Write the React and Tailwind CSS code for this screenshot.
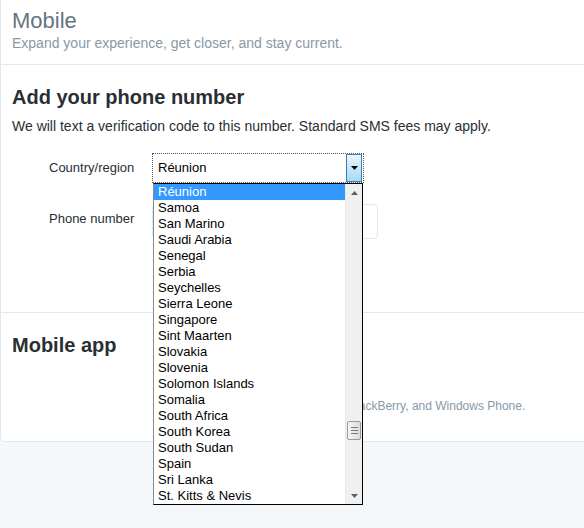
import { useState } from "react";

const countries = [
  "Réunion",
  "Samoa",
  "San Marino",
  "Saudi Arabia",
  "Senegal",
  "Serbia",
  "Seychelles",
  "Sierra Leone",
  "Singapore",
  "Sint Maarten",
  "Slovakia",
  "Slovenia",
  "Solomon Islands",
  "Somalia",
  "South Africa",
  "South Korea",
  "South Sudan",
  "Spain",
  "Sri Lanka",
  "St. Kitts & Nevis",
];

const Scrollbar = () => (
  <div className="w-[17px] h-full flex flex-col bg-[#f0f0f0] border-l border-[#e8e8e8]">
    {/* up arrow */}
    <div className="h-[17px] flex items-center justify-center">
      <svg width="7" height="4" viewBox="0 0 7 4">
        <path d="M3.5 0 L7 4 L0 4 Z" fill="#606060" />
      </svg>
    </div>
    <div className="h-[220px]" />
    {/* thumb */}
    <div className="mx-px h-[19px] rounded-[2px] border border-[#9a9a9a] bg-gradient-to-r from-[#f6f6f6] to-[#dcdcdc] flex flex-col items-center justify-center gap-[2px]">
      <div className="w-[7px] h-px bg-[#7a7a7a]" />
      <div className="w-[7px] h-px bg-[#7a7a7a]" />
      <div className="w-[7px] h-px bg-[#7a7a7a]" />
    </div>
    <div className="flex-1" />
    {/* down arrow */}
    <div className="h-[17px] flex items-center justify-center">
      <svg width="7" height="4" viewBox="0 0 7 4">
        <path d="M0 0 L7 0 L3.5 4 Z" fill="#606060" />
      </svg>
    </div>
  </div>
);

const CountryList = ({ selected }) => (
  <div className="absolute left-[152px] top-[183px] w-[210px] h-[322px] bg-white border border-black border-l-[#8a8a8a] flex z-10">
    <ul className="flex-1">
      {countries.map((c) => (
        <li
          key={c}
          className={
            c === selected
              ? "h-4 leading-4 pl-[4px] text-[13px] bg-[#3399ff] text-white"
              : "h-4 leading-4 pl-[4px] text-[13px] text-black"
          }
        >
          {c}
        </li>
      ))}
    </ul>
    <Scrollbar />
  </div>
);

export default function App() {
  const [country] = useState("Réunion");

  return (
    <div className="min-h-screen bg-[#f5f8fa] font-['Liberation_Sans',Arial,sans-serif]">
      <div className="relative h-[442px] bg-white border-l border-b border-[#e1e8ed] rounded-bl-[5px]">
        {/* Header */}
        <div className="h-[65px] pl-[11px] pr-3 pt-2 border-b border-[#e1e8ed]">
          <h1 className="text-[22px] leading-[26px] text-[#66757f]">Mobile</h1>
          <p className="text-[14px] leading-[18px] text-[#8899a6]">
            Expand your experience, get closer, and stay current.
          </p>
        </div>

        {/* Phone number */}
        <div className="h-[248px] pl-[11px] pr-3 pt-5 border-b border-[#e1e8ed]">
          <h2 className="text-[20px] leading-6 font-bold text-[#292f33]">
            Add your phone number
          </h2>
          <p className="mt-[8px] text-[14px] leading-[18px] text-[#292f33]">
            We will text a verification code to this number. Standard SMS fees
            may apply.
          </p>

          <div className="mt-[18px] flex items-center">
            <label className="w-[140px] pl-[37px] text-[13px] leading-4 text-[#292f33]">
              Country/region
            </label>
            <div className="w-[212px] h-[30px] border border-dotted border-[#555] flex items-center">
              <span className="flex-1 pl-[5px] text-[13px] text-black">
                {country}
              </span>
              <div className="w-4 h-[28px] mr-px border border-[#3c7fb1] bg-gradient-to-b from-[#eaf6fd] to-[#a7d9f5] flex items-center justify-center">
                <svg width="7" height="4" viewBox="0 0 7 4">
                  <path d="M0 0 L7 0 L3.5 4 Z" fill="#000" />
                </svg>
              </div>
            </div>
          </div>

          <div className="mt-[21px] flex items-start">
            <label className="w-[140px] pl-[37px] pt-[7px] text-[13px] leading-4 text-[#292f33]">
              Phone number
            </label>
            <input
              type="tel"
              className="w-[226px] h-[35px] rounded-[4px] border border-[#e1e8ed] bg-white"
            />
          </div>
        </div>

        {/* Mobile app */}
        <div className="pl-[11px] pr-3 pt-5">
          <h2 className="text-[20px] leading-6 font-bold text-[#292f33]">
            Mobile app
          </h2>
          <p className="mt-[41px] pl-[158px] text-[12px] leading-4 text-[#8899a6]">
            Twitter for iPhone, iPad, Android, BlackBerry, and Windows Phone.
          </p>
        </div>

        <CountryList selected={country} />
      </div>
    </div>
  );
}
